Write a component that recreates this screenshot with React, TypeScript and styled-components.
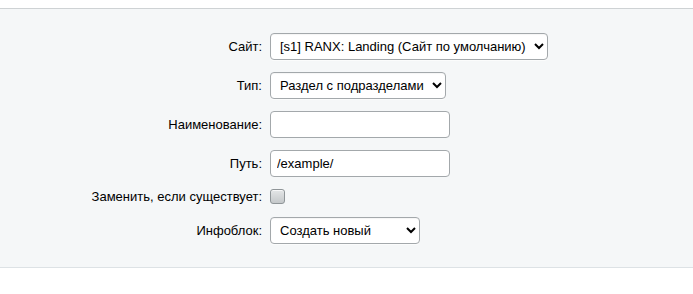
import React from "react";
import styled, { createGlobalStyle } from "styled-components";

const Global = createGlobalStyle`
  html, body { margin: 0; padding: 0; background: #fff; }
  body { font-family: "Liberation Sans", Arial, sans-serif; font-size: 13px; color: #000; }
`;

const Page = styled.div`
  padding-top: 8px;
`;

const Panel = styled.div`
  background: #f5f7f8;
  border-top: 1px solid #ced2d4;
  border-bottom: 1px solid #dde2e5;
  padding: 24px 0 23px;
`;

const Form = styled.div`
  display: grid;
  grid-template-columns: 262px auto;
  column-gap: 8px;
  row-gap: 12px;
  align-items: center;
`;

const Label = styled.label`
  text-align: right;
  font-size: 13px;
  color: #000;
  line-height: 16px;
`;

const Control = styled.div`
  display: flex;
  align-items: center;
`;

const Select = styled.select<{ $w: number }>`
  width: ${(p) => p.$w}px;
  height: 27px;
  box-sizing: border-box;
  border: 1px solid #a3a8ab;
  border-radius: 4px;
  background: #fff;
  font-family: "Liberation Sans", Arial, sans-serif;
  font-size: 13px;
  color: #000;
  padding: 0 2px 0 5px;
  box-shadow: 0 1px 0 rgba(255,255,255,0.6), inset 0 1px 1px rgba(0,0,0,0.04);
  outline: none;
`;

const Input = styled.input`
  width: 180px;
  height: 27px;
  box-sizing: border-box;
  border: 1px solid #a3a8ab;
  border-radius: 4px;
  background: #fff;
  font-family: "Liberation Sans", Arial, sans-serif;
  font-size: 13px;
  color: #000;
  padding: 0 6px;
  outline: none;
`;

const Check = styled.input`
  appearance: none;
  margin: 0;
  width: 15px;
  height: 15px;
  box-sizing: border-box;
  border: 1px solid #8f9598;
  border-radius: 3px;
  background: linear-gradient(#e4e6e7, #c4c8ca);
  box-shadow: inset 0 1px 0 rgba(255,255,255,0.7);
`;

const CheckRow = styled.div`
  height: 16px;
  display: flex;
  align-items: flex-start;
`;

export default function App() {
  return (
    <>
      <Global />
      <Page>
        <Panel>
          <Form>
            <Label>Сайт:</Label>
            <Control>
              <Select $w={278} defaultValue="s1">
                <option value="s1">[s1] RANX: Landing (Сайт по умолчанию)</option>
              </Select>
            </Control>

            <Label>Тип:</Label>
            <Control>
              <Select $w={176} defaultValue="a">
                <option value="a">Раздел с подразделами</option>
              </Select>
            </Control>

            <Label>Наименование:</Label>
            <Control>
              <Input defaultValue="" />
            </Control>

            <Label>Путь:</Label>
            <Control>
              <Input defaultValue="/example/" />
            </Control>

            <Label>Заменить, если существует:</Label>
            <CheckRow>
              <Check type="checkbox" />
            </CheckRow>

            <Label>Инфоблок:</Label>
            <Control>
              <Select $w={150} defaultValue="new">
                <option value="new">Создать новый</option>
              </Select>
            </Control>
          </Form>
        </Panel>
      </Page>
    </>
  );
}
